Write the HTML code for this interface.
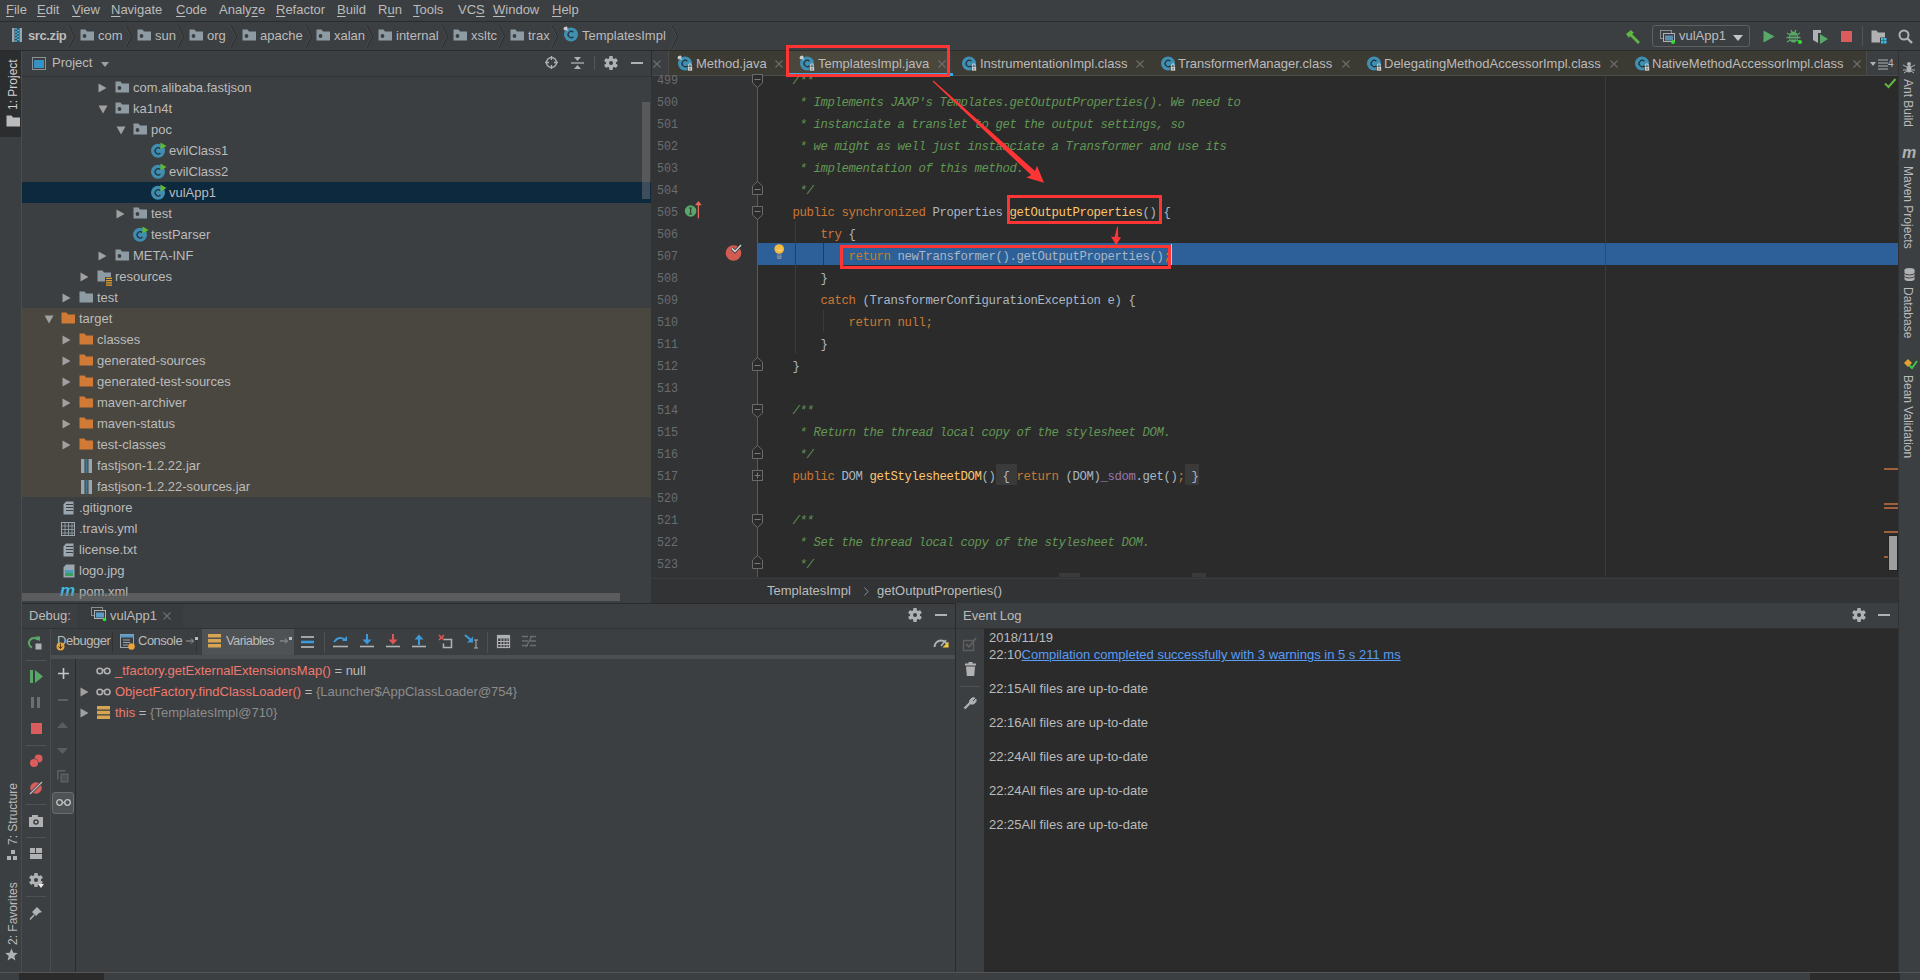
<!DOCTYPE html><html><head><meta charset="utf-8"><style>
*{box-sizing:border-box}
html,body{margin:0;padding:0}
body{width:1920px;height:980px;overflow:hidden;position:relative;background:#3C3F41;font-family:"Liberation Sans",sans-serif;font-size:13px;color:#BBBBBB}
.a{position:absolute}
.t{position:absolute;white-space:pre;line-height:16px}
.u{text-decoration:underline;text-underline-offset:2px}
.code{position:absolute;white-space:pre;font-family:"Liberation Mono",monospace;font-size:12.3px;letter-spacing:-0.38px;line-height:22px;color:#A9B7C6}
.cm{color:#629755;font-style:italic}
.kw{color:#CC7832}
.fn{color:#FFC66D}
.fd{color:#9876AA}
.ln{position:absolute;font-family:"Liberation Mono",monospace;font-size:13px;line-height:22px;color:#6A6D70;white-space:pre;transform:scaleX(0.9);transform-origin:0 0}
svg{position:absolute;overflow:visible}
</style></head><body>
<div class="a" style="left:0px;top:0px;width:1920px;height:21px;background:#3C3F41;"></div>
<div class="a" style="left:0px;top:21px;width:1920px;height:1px;background:#2B2B2B;"></div>
<div class="t" style="left:6px;top:2px;"><span class="u">F</span>ile</div>
<div class="t" style="left:37px;top:2px;"><span class="u">E</span>dit</div>
<div class="t" style="left:72px;top:2px;"><span class="u">V</span>iew</div>
<div class="t" style="left:111px;top:2px;"><span class="u">N</span>avigate</div>
<div class="t" style="left:176px;top:2px;"><span class="u">C</span>ode</div>
<div class="t" style="left:219px;top:2px;">Analy<span class="u">z</span>e</div>
<div class="t" style="left:276px;top:2px;"><span class="u">R</span>efactor</div>
<div class="t" style="left:337px;top:2px;"><span class="u">B</span>uild</div>
<div class="t" style="left:378px;top:2px;">R<span class="u">u</span>n</div>
<div class="t" style="left:413px;top:2px;"><span class="u">T</span>ools</div>
<div class="t" style="left:458px;top:2px;">VC<span class="u">S</span></div>
<div class="t" style="left:493px;top:2px;"><span class="u">W</span>indow</div>
<div class="t" style="left:552px;top:2px;"><span class="u">H</span>elp</div>
<div class="a" style="left:0px;top:50px;width:1920px;height:1px;background:#2B2B2B;"></div>
<svg style="left:12px;top:28px;" width="10" height="14" viewBox="0 0 10 14"><rect x="0" y="0" width="10" height="14" fill="#9AA7B0"/><rect x="2.5" y="0" width="5" height="14" fill="#2F4A5A"/><path d="M3 1h2M5 2.5h2M3 4h2M5 5.5h2M3 7h2M5 8.5h2M3 10h2M5 11.5h2M3 13h2" stroke="#40B6E0" stroke-width="1.4"/></svg>
<div class="t" style="left:28px;top:28px;font-weight:bold;letter-spacing:-0.4px">src.zip</div>
<svg style="left:67.5px;top:24.5px;" width="8" height="23" viewBox="0 0 8 23"><path d="M1 0.5L6.5 11.5L1 22.5" stroke="#2A2A2A" stroke-width="1" fill="none"/><path d="M0 0.5L5.5 11.5L0 22.5" stroke="#4A4D4F" stroke-width="0.8" fill="none"/></svg>
<svg style="left:80px;top:28px;" width="15" height="14" viewBox="0 0 15 14"><path d="M0.5 1.5h5l1.5 2h7v9h-13.5z" fill="#8E9BA3"/><circle cx="4.5" cy="8" r="1.9" fill="#3C3F41"/></svg>
<div class="t" style="left:98px;top:28px;">com</div>
<svg style="left:124.5px;top:24.5px;" width="8" height="23" viewBox="0 0 8 23"><path d="M1 0.5L6.5 11.5L1 22.5" stroke="#2A2A2A" stroke-width="1" fill="none"/><path d="M0 0.5L5.5 11.5L0 22.5" stroke="#4A4D4F" stroke-width="0.8" fill="none"/></svg>
<svg style="left:137px;top:28px;" width="15" height="14" viewBox="0 0 15 14"><path d="M0.5 1.5h5l1.5 2h7v9h-13.5z" fill="#8E9BA3"/><circle cx="4.5" cy="8" r="1.9" fill="#3C3F41"/></svg>
<div class="t" style="left:155px;top:28px;">sun</div>
<svg style="left:176.5px;top:24.5px;" width="8" height="23" viewBox="0 0 8 23"><path d="M1 0.5L6.5 11.5L1 22.5" stroke="#2A2A2A" stroke-width="1" fill="none"/><path d="M0 0.5L5.5 11.5L0 22.5" stroke="#4A4D4F" stroke-width="0.8" fill="none"/></svg>
<svg style="left:189px;top:28px;" width="15" height="14" viewBox="0 0 15 14"><path d="M0.5 1.5h5l1.5 2h7v9h-13.5z" fill="#8E9BA3"/><circle cx="4.5" cy="8" r="1.9" fill="#3C3F41"/></svg>
<div class="t" style="left:207px;top:28px;">org</div>
<svg style="left:229.5px;top:24.5px;" width="8" height="23" viewBox="0 0 8 23"><path d="M1 0.5L6.5 11.5L1 22.5" stroke="#2A2A2A" stroke-width="1" fill="none"/><path d="M0 0.5L5.5 11.5L0 22.5" stroke="#4A4D4F" stroke-width="0.8" fill="none"/></svg>
<svg style="left:242px;top:28px;" width="15" height="14" viewBox="0 0 15 14"><path d="M0.5 1.5h5l1.5 2h7v9h-13.5z" fill="#8E9BA3"/><circle cx="4.5" cy="8" r="1.9" fill="#3C3F41"/></svg>
<div class="t" style="left:260px;top:28px;">apache</div>
<svg style="left:304.5px;top:24.5px;" width="8" height="23" viewBox="0 0 8 23"><path d="M1 0.5L6.5 11.5L1 22.5" stroke="#2A2A2A" stroke-width="1" fill="none"/><path d="M0 0.5L5.5 11.5L0 22.5" stroke="#4A4D4F" stroke-width="0.8" fill="none"/></svg>
<svg style="left:316px;top:28px;" width="15" height="14" viewBox="0 0 15 14"><path d="M0.5 1.5h5l1.5 2h7v9h-13.5z" fill="#8E9BA3"/><circle cx="4.5" cy="8" r="1.9" fill="#3C3F41"/></svg>
<div class="t" style="left:334px;top:28px;">xalan</div>
<svg style="left:365.5px;top:24.5px;" width="8" height="23" viewBox="0 0 8 23"><path d="M1 0.5L6.5 11.5L1 22.5" stroke="#2A2A2A" stroke-width="1" fill="none"/><path d="M0 0.5L5.5 11.5L0 22.5" stroke="#4A4D4F" stroke-width="0.8" fill="none"/></svg>
<svg style="left:378px;top:28px;" width="15" height="14" viewBox="0 0 15 14"><path d="M0.5 1.5h5l1.5 2h7v9h-13.5z" fill="#8E9BA3"/><circle cx="4.5" cy="8" r="1.9" fill="#3C3F41"/></svg>
<div class="t" style="left:396px;top:28px;">internal</div>
<svg style="left:440.5px;top:24.5px;" width="8" height="23" viewBox="0 0 8 23"><path d="M1 0.5L6.5 11.5L1 22.5" stroke="#2A2A2A" stroke-width="1" fill="none"/><path d="M0 0.5L5.5 11.5L0 22.5" stroke="#4A4D4F" stroke-width="0.8" fill="none"/></svg>
<svg style="left:453px;top:28px;" width="15" height="14" viewBox="0 0 15 14"><path d="M0.5 1.5h5l1.5 2h7v9h-13.5z" fill="#8E9BA3"/><circle cx="4.5" cy="8" r="1.9" fill="#3C3F41"/></svg>
<div class="t" style="left:471px;top:28px;">xsltc</div>
<svg style="left:497.5px;top:24.5px;" width="8" height="23" viewBox="0 0 8 23"><path d="M1 0.5L6.5 11.5L1 22.5" stroke="#2A2A2A" stroke-width="1" fill="none"/><path d="M0 0.5L5.5 11.5L0 22.5" stroke="#4A4D4F" stroke-width="0.8" fill="none"/></svg>
<svg style="left:510px;top:28px;" width="15" height="14" viewBox="0 0 15 14"><path d="M0.5 1.5h5l1.5 2h7v9h-13.5z" fill="#8E9BA3"/><circle cx="4.5" cy="8" r="1.9" fill="#3C3F41"/></svg>
<div class="t" style="left:528px;top:28px;">trax</div>
<svg style="left:550.5px;top:24.5px;" width="8" height="23" viewBox="0 0 8 23"><path d="M1 0.5L6.5 11.5L1 22.5" stroke="#2A2A2A" stroke-width="1" fill="none"/><path d="M0 0.5L5.5 11.5L0 22.5" stroke="#4A4D4F" stroke-width="0.8" fill="none"/></svg>
<svg style="left:563px;top:26px;" width="16" height="17" viewBox="0 0 16 17"><circle cx="8" cy="8.5" r="7" fill="#3F90B2"/><path d="M10.4 6.3a3.1 3.1 0 1 0 0 4.4" stroke="#22313A" stroke-width="1.2" fill="none"/><path d="M1.5 1.5l3.2 3.2" stroke="#C9CDD0" stroke-width="1.2"/><ellipse cx="2.6" cy="2.4" rx="2.2" ry="1.6" transform="rotate(-35 2.6 2.4)" fill="#C9CDD0"/></svg>
<div class="t" style="left:582px;top:28px;">TemplatesImpl</div>
<svg style="left:670.5px;top:24.5px;" width="8" height="23" viewBox="0 0 8 23"><path d="M1 0.5L6.5 11.5L1 22.5" stroke="#2A2A2A" stroke-width="1" fill="none"/><path d="M0 0.5L5.5 11.5L0 22.5" stroke="#4A4D4F" stroke-width="0.8" fill="none"/></svg>
<svg style="left:1625px;top:29px;" width="16" height="15" viewBox="0 0 16 15"><path d="M1 5l5-4 3 3-2 1 8 8-2 2-8-8-1 2z" fill="#62B543"/></svg>
<div class="a" style="left:1652px;top:25px;width:98px;height:22px;background:transparent;border:1px solid #5E6060;border-radius:3px"></div>
<svg style="left:1660px;top:30px;" width="16" height="14" viewBox="0 0 16 14"><rect x="0.5" y="0.5" width="11" height="8" fill="none" stroke="#8C8C8C"/><rect x="3.5" y="3.5" width="11" height="8" fill="#3C3F41" stroke="#AFB1B3"/><rect x="5" y="5.5" width="8" height="5" fill="#5B8EAF"/><circle cx="13" cy="12" r="2" fill="#2FE22F"/></svg>
<div class="t" style="left:1679px;top:28px;">vulApp1</div>
<svg style="left:1733px;top:35px;" width="10" height="6" viewBox="0 0 10 6"><path d="M0 0h10L5 6z" fill="#C5C5C5"/></svg>
<svg style="left:1763px;top:30px;" width="12" height="13" viewBox="0 0 12 13"><path d="M0.5 0.5L11.5 6.5L0.5 12.5z" fill="#59A869"/></svg>
<svg style="left:1786px;top:28px;" width="17" height="17" viewBox="0 0 17 17"><ellipse cx="7.5" cy="9" rx="4.5" ry="5.5" fill="#59A869"/><path d="M1 5l3 2M14 5l-3 2M0.5 9.5h3M11.5 9.5h3M1 14l3-2M14 14l-3-2M5 2l1 2M10 2l-1 2" stroke="#59A869" stroke-width="1.3"/><path d="M4 8h7M4 11h7" stroke="#3C3F41" stroke-width="1"/><circle cx="14" cy="14" r="2" fill="#2FE22F"/></svg>
<svg style="left:1812px;top:29px;" width="17" height="16" viewBox="0 0 17 16"><path d="M1 1h8v3h-3v10l-5-3z" fill="#AFB1B3"/><path d="M8 5l8 5-8 5z" fill="#59A869"/></svg>
<div class="a" style="left:1841px;top:31px;width:11px;height:11px;background:#DB5C5C;"></div>
<div class="a" style="left:1862px;top:26px;width:1px;height:20px;background:#555555;"></div>
<svg style="left:1871px;top:30px;" width="16" height="14" viewBox="0 0 16 14"><path d="M0.5 0.5h5l1.5 2h7v5h-5v5h-8.5z" fill="#AFB1B3"/><rect x="10" y="8" width="2.5" height="2.5" fill="#40B6E0"/><rect x="13" y="8" width="2.5" height="2.5" fill="#40B6E0"/><rect x="10" y="11" width="2.5" height="2.5" fill="#40B6E0"/><rect x="13" y="11" width="2.5" height="2.5" fill="#40B6E0"/></svg>
<svg style="left:1898px;top:29px;" width="15" height="15" viewBox="0 0 15 15"><circle cx="6" cy="6" r="4.5" fill="none" stroke="#AFB1B3" stroke-width="2"/><path d="M9 9l5 5" stroke="#AFB1B3" stroke-width="2.4"/></svg>
<div class="a" style="left:0px;top:51px;width:21px;height:921px;background:#3C3F41;"></div>
<div class="a" style="left:21px;top:51px;width:1px;height:921px;background:#4A4C4E;"></div>
<div class="a" style="left:0px;top:51px;width:21px;height:86px;background:#2B2D2E;"></div>
<div class="t" style="left:5px;top:110px;color:#D0D0D0;font-size:12px;transform-origin:0 0;transform:rotate(-90deg)">1: Project</div>
<svg style="left:6px;top:114px;" width="15" height="14" viewBox="0 0 15 14"><path d="M0.5 1.5h5l1.5 2h7v9h-13.5z" fill="#BBBBBB"/></svg>
<div class="a" style="left:22px;top:51px;width:629px;height:552px;background:#3C3F41;"></div>
<div class="a" style="left:22px;top:76px;width:629px;height:1px;background:#323232;"></div>
<svg style="left:32px;top:57px;" width="14" height="13" viewBox="0 0 14 13"><rect x="0.5" y="0.5" width="13" height="12" fill="#3C3F41" stroke="#8C9295"/><rect x="2" y="3" width="10" height="8" fill="#3592C4"/></svg>
<div class="t" style="left:52px;top:55px;">Project</div>
<svg style="left:101px;top:62px;" width="8" height="5" viewBox="0 0 8 5"><path d="M0 0h8L4 5z" fill="#A0A0A0"/></svg>
<svg style="left:545px;top:56px;" width="13" height="13" viewBox="0 0 13 13"><circle cx="6.5" cy="6.5" r="5" fill="none" stroke="#AFB1B3" stroke-width="1.3"/><path d="M6.5 0v4M6.5 9v4M0 6.5h4M9 6.5h4" stroke="#AFB1B3" stroke-width="1.3"/></svg>
<svg style="left:571px;top:56px;" width="13" height="14" viewBox="0 0 13 14"><path d="M0 7h13" stroke="#AFB1B3" stroke-width="1.3"/><path d="M3 1h7L6.5 5z M3 13h7L6.5 9z" fill="#AFB1B3"/></svg>
<div class="a" style="left:594px;top:56px;width:1px;height:14px;background:#555555;"></div>
<svg style="left:604px;top:56px;" width="14" height="14" viewBox="0 0 14 14"><g fill="#AFB1B3"><circle cx="7" cy="7" r="5"/><rect x="5.2" y="0" width="3.6" height="3.5" rx="0.8" transform="rotate(0 7 7)"/><rect x="5.2" y="0" width="3.6" height="3.5" rx="0.8" transform="rotate(60 7 7)"/><rect x="5.2" y="0" width="3.6" height="3.5" rx="0.8" transform="rotate(120 7 7)"/><rect x="5.2" y="0" width="3.6" height="3.5" rx="0.8" transform="rotate(180 7 7)"/><rect x="5.2" y="0" width="3.6" height="3.5" rx="0.8" transform="rotate(240 7 7)"/><rect x="5.2" y="0" width="3.6" height="3.5" rx="0.8" transform="rotate(300 7 7)"/></g><circle cx="7" cy="7" r="2" fill="#3C3F41"/></svg>
<div class="a" style="left:631px;top:62px;width:12px;height:2px;background:#AFB1B3;"></div>
<div class="a" style="left:22px;top:308px;width:629px;height:189px;background:#4A4740;"></div>
<div class="a" style="left:22px;top:182px;width:629px;height:21px;background:#0D293E;"></div>
<svg style="left:98px;top:83px;" width="9" height="10" viewBox="0 0 9 10"><path d="M0.5 0.5L8.5 5L0.5 9.5z" fill="#A0A0A0"/></svg>
<svg style="left:115px;top:80px;" width="15" height="14" viewBox="0 0 15 14"><path d="M0.5 1.5h5l1.5 2h7v9h-13.5z" fill="#8E9BA3"/><circle cx="4.5" cy="8" r="1.9" fill="#3C3F41"/></svg>
<div class="t" style="left:133px;top:80px;">com.alibaba.fastjson</div>
<svg style="left:98px;top:105px;" width="10" height="9" viewBox="0 0 10 9"><path d="M0.5 0.5L9.5 0.5L5 8.5z" fill="#A0A0A0"/></svg>
<svg style="left:115px;top:101px;" width="15" height="14" viewBox="0 0 15 14"><path d="M0.5 1.5h5l1.5 2h7v9h-13.5z" fill="#8E9BA3"/><circle cx="4.5" cy="8" r="1.9" fill="#3C3F41"/></svg>
<div class="t" style="left:133px;top:101px;">ka1n4t</div>
<svg style="left:116px;top:126px;" width="10" height="9" viewBox="0 0 10 9"><path d="M0.5 0.5L9.5 0.5L5 8.5z" fill="#A0A0A0"/></svg>
<svg style="left:133px;top:122px;" width="15" height="14" viewBox="0 0 15 14"><path d="M0.5 1.5h5l1.5 2h7v9h-13.5z" fill="#8E9BA3"/><circle cx="4.5" cy="8" r="1.9" fill="#3C3F41"/></svg>
<div class="t" style="left:151px;top:122px;">poc</div>
<svg style="left:151px;top:142px;" width="16" height="17" viewBox="0 0 16 17"><circle cx="7" cy="8.8" r="7" fill="#3F8DB0"/><path d="M9.4 6.6a3.1 3.1 0 1 0 0 4.4" stroke="#22313A" stroke-width="1.2" fill="none"/><path d="M9.5 0.5l6 3.5-6 3.5z" fill="#5FB832"/></svg>
<div class="t" style="left:169px;top:143px;">evilClass1</div>
<svg style="left:151px;top:163px;" width="16" height="17" viewBox="0 0 16 17"><circle cx="7" cy="8.8" r="7" fill="#3F8DB0"/><path d="M9.4 6.6a3.1 3.1 0 1 0 0 4.4" stroke="#22313A" stroke-width="1.2" fill="none"/><path d="M9.5 0.5l6 3.5-6 3.5z" fill="#5FB832"/></svg>
<div class="t" style="left:169px;top:164px;">evilClass2</div>
<svg style="left:151px;top:184px;" width="16" height="17" viewBox="0 0 16 17"><circle cx="7" cy="8.8" r="7" fill="#3F8DB0"/><path d="M9.4 6.6a3.1 3.1 0 1 0 0 4.4" stroke="#22313A" stroke-width="1.2" fill="none"/><path d="M9.5 0.5l6 3.5-6 3.5z" fill="#5FB832"/></svg>
<div class="t" style="left:169px;top:185px;">vulApp1</div>
<svg style="left:116px;top:209px;" width="9" height="10" viewBox="0 0 9 10"><path d="M0.5 0.5L8.5 5L0.5 9.5z" fill="#A0A0A0"/></svg>
<svg style="left:133px;top:206px;" width="15" height="14" viewBox="0 0 15 14"><path d="M0.5 1.5h5l1.5 2h7v9h-13.5z" fill="#8E9BA3"/><circle cx="4.5" cy="8" r="1.9" fill="#3C3F41"/></svg>
<div class="t" style="left:151px;top:206px;">test</div>
<svg style="left:133px;top:226px;" width="16" height="17" viewBox="0 0 16 17"><circle cx="7" cy="8.8" r="7" fill="#3F8DB0"/><path d="M9.4 6.6a3.1 3.1 0 1 0 0 4.4" stroke="#22313A" stroke-width="1.2" fill="none"/><path d="M9.5 0.5l6 3.5-6 3.5z" fill="#5FB832"/></svg>
<div class="t" style="left:151px;top:227px;">testParser</div>
<svg style="left:98px;top:251px;" width="9" height="10" viewBox="0 0 9 10"><path d="M0.5 0.5L8.5 5L0.5 9.5z" fill="#A0A0A0"/></svg>
<svg style="left:115px;top:248px;" width="15" height="14" viewBox="0 0 15 14"><path d="M0.5 1.5h5l1.5 2h7v9h-13.5z" fill="#8E9BA3"/><circle cx="4.5" cy="8" r="1.9" fill="#3C3F41"/></svg>
<div class="t" style="left:133px;top:248px;">META-INF</div>
<svg style="left:80px;top:272px;" width="9" height="10" viewBox="0 0 9 10"><path d="M0.5 0.5L8.5 5L0.5 9.5z" fill="#A0A0A0"/></svg>
<svg style="left:97px;top:269px;" width="16" height="17" viewBox="0 0 16 17"><path d="M0.5 1.5h5l1.5 2h7v9h-13.5z" fill="#8E9BA3"/><rect x="8" y="8" width="8" height="9" fill="#3C3F41"/><path d="M9 9.3h6M9 11.6h6M9 13.9h6M9 16.2h6" stroke="#E5A12E" stroke-width="1.3"/></svg>
<div class="t" style="left:115px;top:269px;">resources</div>
<svg style="left:62px;top:293px;" width="9" height="10" viewBox="0 0 9 10"><path d="M0.5 0.5L8.5 5L0.5 9.5z" fill="#A0A0A0"/></svg>
<svg style="left:79px;top:290px;" width="15" height="14" viewBox="0 0 15 14"><path d="M0.5 1.5h5l1.5 2h7v9h-13.5z" fill="#8E9BA3"/></svg>
<div class="t" style="left:97px;top:290px;">test</div>
<svg style="left:44px;top:315px;" width="10" height="9" viewBox="0 0 10 9"><path d="M0.5 0.5L9.5 0.5L5 8.5z" fill="#A0A0A0"/></svg>
<svg style="left:61px;top:311px;" width="15" height="14" viewBox="0 0 15 14"><path d="M0.5 1.5h5l1.5 2h7v9h-13.5z" fill="#D07A35"/></svg>
<div class="t" style="left:79px;top:311px;">target</div>
<svg style="left:62px;top:335px;" width="9" height="10" viewBox="0 0 9 10"><path d="M0.5 0.5L8.5 5L0.5 9.5z" fill="#A0A0A0"/></svg>
<svg style="left:79px;top:332px;" width="15" height="14" viewBox="0 0 15 14"><path d="M0.5 1.5h5l1.5 2h7v9h-13.5z" fill="#D07A35"/></svg>
<div class="t" style="left:97px;top:332px;">classes</div>
<svg style="left:62px;top:356px;" width="9" height="10" viewBox="0 0 9 10"><path d="M0.5 0.5L8.5 5L0.5 9.5z" fill="#A0A0A0"/></svg>
<svg style="left:79px;top:353px;" width="15" height="14" viewBox="0 0 15 14"><path d="M0.5 1.5h5l1.5 2h7v9h-13.5z" fill="#D07A35"/></svg>
<div class="t" style="left:97px;top:353px;">generated-sources</div>
<svg style="left:62px;top:377px;" width="9" height="10" viewBox="0 0 9 10"><path d="M0.5 0.5L8.5 5L0.5 9.5z" fill="#A0A0A0"/></svg>
<svg style="left:79px;top:374px;" width="15" height="14" viewBox="0 0 15 14"><path d="M0.5 1.5h5l1.5 2h7v9h-13.5z" fill="#D07A35"/></svg>
<div class="t" style="left:97px;top:374px;">generated-test-sources</div>
<svg style="left:62px;top:398px;" width="9" height="10" viewBox="0 0 9 10"><path d="M0.5 0.5L8.5 5L0.5 9.5z" fill="#A0A0A0"/></svg>
<svg style="left:79px;top:395px;" width="15" height="14" viewBox="0 0 15 14"><path d="M0.5 1.5h5l1.5 2h7v9h-13.5z" fill="#D07A35"/></svg>
<div class="t" style="left:97px;top:395px;">maven-archiver</div>
<svg style="left:62px;top:419px;" width="9" height="10" viewBox="0 0 9 10"><path d="M0.5 0.5L8.5 5L0.5 9.5z" fill="#A0A0A0"/></svg>
<svg style="left:79px;top:416px;" width="15" height="14" viewBox="0 0 15 14"><path d="M0.5 1.5h5l1.5 2h7v9h-13.5z" fill="#D07A35"/></svg>
<div class="t" style="left:97px;top:416px;">maven-status</div>
<svg style="left:62px;top:440px;" width="9" height="10" viewBox="0 0 9 10"><path d="M0.5 0.5L8.5 5L0.5 9.5z" fill="#A0A0A0"/></svg>
<svg style="left:79px;top:437px;" width="15" height="14" viewBox="0 0 15 14"><path d="M0.5 1.5h5l1.5 2h7v9h-13.5z" fill="#D07A35"/></svg>
<div class="t" style="left:97px;top:437px;">test-classes</div>
<svg style="left:81px;top:459px;" width="11" height="14" viewBox="0 0 11 14"><rect x="0" y="0" width="11" height="14" fill="#9AA7B0"/><rect x="3.5" y="0" width="4" height="14" fill="#3C3F41"/><path d="M4.5 1h2M4.5 3h2M4.5 5h2M4.5 7h2M4.5 9h2M4.5 11h2M4.5 13h2" stroke="#40B6E0" stroke-width="1"/></svg>
<div class="t" style="left:97px;top:458px;">fastjson-1.2.22.jar</div>
<svg style="left:81px;top:480px;" width="11" height="14" viewBox="0 0 11 14"><rect x="0" y="0" width="11" height="14" fill="#9AA7B0"/><rect x="3.5" y="0" width="4" height="14" fill="#3C3F41"/><path d="M4.5 1h2M4.5 3h2M4.5 5h2M4.5 7h2M4.5 9h2M4.5 11h2M4.5 13h2" stroke="#40B6E0" stroke-width="1"/></svg>
<div class="t" style="left:97px;top:479px;">fastjson-1.2.22-sources.jar</div>
<svg style="left:63px;top:501px;" width="11" height="14" viewBox="0 0 11 14"><path d="M3 0.5h7.5v13h-10v-10z" fill="#9AA7B0"/><path d="M3 3.5h7M3 6.5h7M3 9.5h7" stroke="#3C3F41" stroke-width="1"/></svg>
<div class="t" style="left:79px;top:500px;">.gitignore</div>
<svg style="left:61px;top:522px;" width="14" height="14" viewBox="0 0 14 14"><rect x="0.5" y="0.5" width="13" height="13" fill="none" stroke="#9AA7B0"/><path d="M0.5 4h13M0.5 7.5h13M0.5 11h13M4 0.5v13M7.5 0.5v13M11 0.5v13" stroke="#9AA7B0" stroke-width="0.8"/></svg>
<div class="t" style="left:79px;top:521px;">.travis.yml</div>
<svg style="left:63px;top:543px;" width="11" height="14" viewBox="0 0 11 14"><path d="M3 0.5h7.5v13h-10v-10z" fill="#9AA7B0"/><path d="M3 3.5h7M3 6.5h7M3 9.5h7" stroke="#3C3F41" stroke-width="1"/></svg>
<div class="t" style="left:79px;top:542px;">license.txt</div>
<svg style="left:63px;top:564px;" width="12" height="14" viewBox="0 0 12 14"><path d="M3 0.5h8.5v13h-11v-10z" fill="#9AA7B0"/><rect x="2" y="6" width="8" height="6" fill="#3C9E5C"/><rect x="2" y="6" width="8" height="3" fill="#4A9DBB"/></svg>
<div class="t" style="left:79px;top:563px;">logo.jpg</div>
<div class="t" style="left:60px;top:582px;color:#40B6E0;font-size:17px;font-style:italic;font-weight:bold;line-height:17px">m</div>
<div class="t" style="left:79px;top:584px;">pom.xml</div>
<div class="a" style="left:22px;top:593px;width:598px;height:8px;background:rgba(122,122,122,0.5);"></div>
<div class="a" style="left:642px;top:102px;width:8px;height:97px;background:rgba(122,122,122,0.45);"></div>
<div class="a" style="left:651px;top:51px;width:1px;height:25px;background:#2F3133;"></div>
<div class="a" style="left:651px;top:51px;width:1247px;height:24px;background:#3C3F41;"></div>
<div class="a" style="left:651px;top:75px;width:1247px;height:1px;background:#4B4B4B;"></div>
<svg style="left:653px;top:60px;" width="8" height="8" viewBox="0 0 8 8"><path d="M0.5 0.5L7.5 7.5M7.5 0.5L0.5 7.5" stroke="#6E6E6E" stroke-width="1.1"/></svg>
<div class="a" style="left:668px;top:51px;width:1px;height:24px;background:#4B4B4B;"></div>
<div class="a" style="left:669px;top:51px;width:117px;height:24px;background:#3B3A33;"></div>
<div class="a" style="left:786px;top:51px;width:1px;height:24px;background:#4B4B4B;"></div>
<svg style="left:677px;top:55px;" width="16" height="17" viewBox="0 0 16 17"><circle cx="8" cy="8.5" r="7" fill="#3F90B2"/><path d="M10.4 6.3a3.1 3.1 0 1 0 0 4.4" stroke="#22313A" stroke-width="1.2" fill="none"/><path d="M1.5 1.5l3.2 3.2" stroke="#C9CDD0" stroke-width="1.2"/><ellipse cx="2.6" cy="2.4" rx="2.2" ry="1.6" transform="rotate(-35 2.6 2.4)" fill="#C9CDD0"/><rect x="10.3" y="11.3" width="5.2" height="4.7" fill="#D0D0D0" stroke="#3B3A33" stroke-width="0.7"/><path d="M11.5 11.5v-1.3a1.4 1.4 0 0 1 2.8 0v1.3" stroke="#D0D0D0" fill="none" stroke-width="1"/><rect x="12.5" y="12.8" width="1" height="1.8" fill="#555"/></svg>
<div class="t" style="left:696px;top:56px;">Method.java</div>
<svg style="left:775px;top:60px;" width="8" height="8" viewBox="0 0 8 8"><path d="M0.5 0.5L7.5 7.5M7.5 0.5L0.5 7.5" stroke="#6E6E6E" stroke-width="1.1"/></svg>
<div class="a" style="left:789px;top:51px;width:160px;height:24px;background:#4A473C;"></div>
<div class="a" style="left:949px;top:51px;width:1px;height:24px;background:#4B4B4B;"></div>
<svg style="left:799px;top:55px;" width="16" height="17" viewBox="0 0 16 17"><circle cx="8" cy="8.5" r="7" fill="#3F90B2"/><path d="M10.4 6.3a3.1 3.1 0 1 0 0 4.4" stroke="#22313A" stroke-width="1.2" fill="none"/><path d="M1.5 1.5l3.2 3.2" stroke="#C9CDD0" stroke-width="1.2"/><ellipse cx="2.6" cy="2.4" rx="2.2" ry="1.6" transform="rotate(-35 2.6 2.4)" fill="#C9CDD0"/><rect x="10.3" y="11.3" width="5.2" height="4.7" fill="#D0D0D0" stroke="#4A473C" stroke-width="0.7"/><path d="M11.5 11.5v-1.3a1.4 1.4 0 0 1 2.8 0v1.3" stroke="#D0D0D0" fill="none" stroke-width="1"/><rect x="12.5" y="12.8" width="1" height="1.8" fill="#555"/></svg>
<div class="t" style="left:818px;top:56px;">TemplatesImpl.java</div>
<svg style="left:938px;top:60px;" width="8" height="8" viewBox="0 0 8 8"><path d="M0.5 0.5L7.5 7.5M7.5 0.5L0.5 7.5" stroke="#6E6E6E" stroke-width="1.1"/></svg>
<div class="a" style="left:951px;top:51px;width:202px;height:24px;background:#3B3A33;"></div>
<div class="a" style="left:1153px;top:51px;width:1px;height:24px;background:#4B4B4B;"></div>
<svg style="left:961px;top:55px;" width="16" height="17" viewBox="0 0 16 17"><circle cx="8" cy="8.5" r="7" fill="#3F90B2"/><path d="M10.4 6.3a3.1 3.1 0 1 0 0 4.4" stroke="#22313A" stroke-width="1.2" fill="none"/><rect x="10.3" y="11.3" width="5.2" height="4.7" fill="#D0D0D0" stroke="#3B3A33" stroke-width="0.7"/><path d="M11.5 11.5v-1.3a1.4 1.4 0 0 1 2.8 0v1.3" stroke="#D0D0D0" fill="none" stroke-width="1"/><rect x="12.5" y="12.8" width="1" height="1.8" fill="#555"/></svg>
<div class="t" style="left:980px;top:56px;">InstrumentationImpl.class</div>
<svg style="left:1136px;top:60px;" width="8" height="8" viewBox="0 0 8 8"><path d="M0.5 0.5L7.5 7.5M7.5 0.5L0.5 7.5" stroke="#6E6E6E" stroke-width="1.1"/></svg>
<div class="a" style="left:1153px;top:51px;width:203px;height:24px;background:#3B3A33;"></div>
<div class="a" style="left:1356px;top:51px;width:1px;height:24px;background:#4B4B4B;"></div>
<svg style="left:1160px;top:55px;" width="16" height="17" viewBox="0 0 16 17"><circle cx="8" cy="8.5" r="7" fill="#3F90B2"/><path d="M10.4 6.3a3.1 3.1 0 1 0 0 4.4" stroke="#22313A" stroke-width="1.2" fill="none"/><rect x="10.3" y="11.3" width="5.2" height="4.7" fill="#D0D0D0" stroke="#3B3A33" stroke-width="0.7"/><path d="M11.5 11.5v-1.3a1.4 1.4 0 0 1 2.8 0v1.3" stroke="#D0D0D0" fill="none" stroke-width="1"/><rect x="12.5" y="12.8" width="1" height="1.8" fill="#555"/></svg>
<div class="t" style="left:1178px;top:56px;">TransformerManager.class</div>
<svg style="left:1342px;top:60px;" width="8" height="8" viewBox="0 0 8 8"><path d="M0.5 0.5L7.5 7.5M7.5 0.5L0.5 7.5" stroke="#6E6E6E" stroke-width="1.1"/></svg>
<div class="a" style="left:1356px;top:51px;width:268px;height:24px;background:#3B3A33;"></div>
<div class="a" style="left:1624px;top:51px;width:1px;height:24px;background:#4B4B4B;"></div>
<svg style="left:1366px;top:55px;" width="16" height="17" viewBox="0 0 16 17"><circle cx="8" cy="8.5" r="7" fill="#3F90B2"/><path d="M10.4 6.3a3.1 3.1 0 1 0 0 4.4" stroke="#22313A" stroke-width="1.2" fill="none"/><rect x="10.3" y="11.3" width="5.2" height="4.7" fill="#D0D0D0" stroke="#3B3A33" stroke-width="0.7"/><path d="M11.5 11.5v-1.3a1.4 1.4 0 0 1 2.8 0v1.3" stroke="#D0D0D0" fill="none" stroke-width="1"/><rect x="12.5" y="12.8" width="1" height="1.8" fill="#555"/></svg>
<div class="t" style="left:1384px;top:56px;">DelegatingMethodAccessorImpl.class</div>
<svg style="left:1610px;top:60px;" width="8" height="8" viewBox="0 0 8 8"><path d="M0.5 0.5L7.5 7.5M7.5 0.5L0.5 7.5" stroke="#6E6E6E" stroke-width="1.1"/></svg>
<div class="a" style="left:1624px;top:51px;width:242px;height:24px;background:#3B3A33;"></div>
<div class="a" style="left:1866px;top:51px;width:1px;height:24px;background:#4B4B4B;"></div>
<svg style="left:1634px;top:55px;" width="16" height="17" viewBox="0 0 16 17"><circle cx="8" cy="8.5" r="7" fill="#3F90B2"/><path d="M10.4 6.3a3.1 3.1 0 1 0 0 4.4" stroke="#22313A" stroke-width="1.2" fill="none"/><rect x="10.3" y="11.3" width="5.2" height="4.7" fill="#D0D0D0" stroke="#3B3A33" stroke-width="0.7"/><path d="M11.5 11.5v-1.3a1.4 1.4 0 0 1 2.8 0v1.3" stroke="#D0D0D0" fill="none" stroke-width="1"/><rect x="12.5" y="12.8" width="1" height="1.8" fill="#555"/></svg>
<div class="t" style="left:1652px;top:56px;">NativeMethodAccessorImpl.class</div>
<svg style="left:1853px;top:60px;" width="8" height="8" viewBox="0 0 8 8"><path d="M0.5 0.5L7.5 7.5M7.5 0.5L0.5 7.5" stroke="#6E6E6E" stroke-width="1.1"/></svg>
<div class="a" style="left:789px;top:73px;width:164px;height:3px;background:#3BA7DA;"></div>
<div class="a" style="left:651px;top:51px;width:1px;height:25px;background:#2B2B2B;"></div>
<svg style="left:1870px;top:59px;" width="26" height="12" viewBox="0 0 26 12"><path d="M0 3h6L3 7z" fill="#AFB1B3"/><path d="M8 1h10M8 4h10M8 7h10M8 10h10" stroke="#AFB1B3" stroke-width="1.2"/></svg>
<div class="t" style="left:1888px;top:56px;font-size:10px">4</div>
<div class="a" style="left:651px;top:76px;width:107px;height:501px;background:#313335;"></div>
<div class="a" style="left:758px;top:76px;width:1140px;height:501px;background:#2B2B2B;"></div>
<div class="a" style="left:1605px;top:76px;width:1px;height:501px;background:#3A3A3A;"></div>
<div class="a" style="left:758px;top:243px;width:1140px;height:22px;background:#2D6099;"></div>
<div class="ln" style="left:657px;top:70px">499</div>
<div class="ln" style="left:657px;top:92px">500</div>
<div class="ln" style="left:657px;top:114px">501</div>
<div class="ln" style="left:657px;top:136px">502</div>
<div class="ln" style="left:657px;top:158px">503</div>
<div class="ln" style="left:657px;top:180px">504</div>
<div class="ln" style="left:657px;top:202px">505</div>
<div class="ln" style="left:657px;top:224px">506</div>
<div class="ln" style="left:657px;top:246px">507</div>
<div class="ln" style="left:657px;top:268px">508</div>
<div class="ln" style="left:657px;top:290px">509</div>
<div class="ln" style="left:657px;top:312px">510</div>
<div class="ln" style="left:657px;top:334px">511</div>
<div class="ln" style="left:657px;top:356px">512</div>
<div class="ln" style="left:657px;top:378px">513</div>
<div class="ln" style="left:657px;top:400px">514</div>
<div class="ln" style="left:657px;top:422px">515</div>
<div class="ln" style="left:657px;top:444px">516</div>
<div class="ln" style="left:657px;top:466px">517</div>
<div class="ln" style="left:657px;top:488px">520</div>
<div class="ln" style="left:657px;top:510px">521</div>
<div class="ln" style="left:657px;top:532px">522</div>
<div class="ln" style="left:657px;top:554px">523</div>
<div class="code" style="left:792.5px;top:70px"><span class="cm">/**</span></div>
<div class="code" style="left:792.5px;top:92px"><span class="cm"> * Implements JAXP's Templates.getOutputProperties(). We need to</span></div>
<div class="code" style="left:792.5px;top:114px"><span class="cm"> * instanciate a translet to get the output settings, so</span></div>
<div class="code" style="left:792.5px;top:136px"><span class="cm"> * we might as well just instanciate a Transformer and use its</span></div>
<div class="code" style="left:792.5px;top:158px"><span class="cm"> * implementation of this method.</span></div>
<div class="code" style="left:792.5px;top:180px"><span class="cm"> */</span></div>
<div class="code" style="left:792.5px;top:202px"><span class="kw">public synchronized </span>Properties <span class="fn">getOutputProperties</span>() {</div>
<div class="code" style="left:820.5px;top:224px"><span class="kw">try </span>{</div>
<div class="code" style="left:848.5px;top:246px"><span class="kw">return </span>newTransformer().getOutputProperties()<span class="kw">;</span></div>
<div class="code" style="left:820.5px;top:268px">}</div>
<div class="code" style="left:820.5px;top:290px"><span class="kw">catch </span>(TransformerConfigurationException e) {</div>
<div class="code" style="left:848.5px;top:312px"><span class="kw">return null;</span></div>
<div class="code" style="left:820.5px;top:334px">}</div>
<div class="code" style="left:792.5px;top:356px">}</div>
<div class="code" style="left:792.5px;top:400px"><span class="cm">/**</span></div>
<div class="code" style="left:792.5px;top:422px"><span class="cm"> * Return the thread local copy of the stylesheet DOM.</span></div>
<div class="code" style="left:792.5px;top:444px"><span class="cm"> */</span></div>
<div class="a" style="left:995.5px;top:464px;width:21px;height:21px;background:#3A3A3A;"></div>
<div class="a" style="left:1184.5px;top:464px;width:14px;height:21px;background:#3A3A3A;"></div>
<div class="code" style="left:792.5px;top:466px"><span class="kw">public </span>DOM <span class="fn">getStylesheetDOM</span>() { <span class="kw">return </span>(DOM)<span class="fd">_sdom</span>.get()<span class="kw">;</span> }</div>
<div class="code" style="left:792.5px;top:510px"><span class="cm">/**</span></div>
<div class="code" style="left:792.5px;top:532px"><span class="cm"> * Set the thread local copy of the stylesheet DOM.</span></div>
<div class="code" style="left:792.5px;top:554px"><span class="cm"> */</span></div>
<div class="a" style="left:757px;top:76px;width:1px;height:501px;background:#5A5A5A;"></div>
<svg style="left:752px;top:74px;" width="11" height="14" viewBox="0 0 11 14"><path d="M0.5 0.5h10v8.5l-5 4.5-5-4.5z" fill="#2B2B2B" stroke="#6A6A6A"/><path d="M2.5 5.5h6" stroke="#7A7A7A"/></svg>
<svg style="left:752px;top:181px;" width="11" height="14" viewBox="0 0 11 14"><path d="M0.5 13.5h10v-8.5l-5-4.5-5 4.5z" fill="#2B2B2B" stroke="#6A6A6A"/><path d="M2.5 8.5h6" stroke="#7A7A7A"/></svg>
<svg style="left:752px;top:206px;" width="11" height="14" viewBox="0 0 11 14"><path d="M0.5 0.5h10v8.5l-5 4.5-5-4.5z" fill="#2B2B2B" stroke="#6A6A6A"/><path d="M2.5 5.5h6" stroke="#7A7A7A"/></svg>
<svg style="left:752px;top:357px;" width="11" height="14" viewBox="0 0 11 14"><path d="M0.5 13.5h10v-8.5l-5-4.5-5 4.5z" fill="#2B2B2B" stroke="#6A6A6A"/><path d="M2.5 8.5h6" stroke="#7A7A7A"/></svg>
<svg style="left:752px;top:404px;" width="11" height="14" viewBox="0 0 11 14"><path d="M0.5 0.5h10v8.5l-5 4.5-5-4.5z" fill="#2B2B2B" stroke="#6A6A6A"/><path d="M2.5 5.5h6" stroke="#7A7A7A"/></svg>
<svg style="left:752px;top:445px;" width="11" height="14" viewBox="0 0 11 14"><path d="M0.5 13.5h10v-8.5l-5-4.5-5 4.5z" fill="#2B2B2B" stroke="#6A6A6A"/><path d="M2.5 8.5h6" stroke="#7A7A7A"/></svg>
<svg style="left:752px;top:470px;" width="11" height="11" viewBox="0 0 11 11"><rect x="0.5" y="0.5" width="10" height="10" fill="#2B2B2B" stroke="#6A6A6A"/><path d="M2.5 5.5h6M5.5 2.5v6" stroke="#7A7A7A"/></svg>
<svg style="left:752px;top:514px;" width="11" height="14" viewBox="0 0 11 14"><path d="M0.5 0.5h10v8.5l-5 4.5-5-4.5z" fill="#2B2B2B" stroke="#6A6A6A"/><path d="M2.5 5.5h6" stroke="#7A7A7A"/></svg>
<svg style="left:752px;top:555px;" width="11" height="14" viewBox="0 0 11 14"><path d="M0.5 13.5h10v-8.5l-5-4.5-5 4.5z" fill="#2B2B2B" stroke="#6A6A6A"/><path d="M2.5 8.5h6" stroke="#7A7A7A"/></svg>
<div class="a" style="left:795px;top:222px;width:1px;height:132px;background:#3B3B3B;"></div>
<div class="a" style="left:823px;top:243px;width:1px;height:22px;background:#283A50;"></div>
<div class="a" style="left:823px;top:310px;width:1px;height:22px;background:#3B3B3B;"></div>
<svg style="left:684px;top:201px;" width="18" height="18" viewBox="0 0 18 18"><circle cx="6.6" cy="10" r="5.8" fill="#59A869"/><path d="M5 7h3.2M5 13h3.2M6.6 7v6" stroke="#3A3A3A" stroke-width="1.2"/><path d="M14.4 17.3V4" stroke="#E8695A" stroke-width="1.3"/><path d="M11 4.3h6.8L14.4 0z" fill="#E8695A"/></svg>
<svg style="left:725px;top:243px;" width="18" height="19" viewBox="0 0 18 19"><circle cx="8.5" cy="10" r="7.8" fill="#D25C52"/><path d="M7 5.5l3 3 6-6.5" stroke="#2B2B2B" stroke-width="3.2" fill="none"/><path d="M7 5.5l3 3 6-6.5" stroke="#C8CBCB" stroke-width="1.8" fill="none"/></svg>
<svg style="left:774px;top:244px;" width="11" height="15" viewBox="0 0 11 15"><circle cx="5.2" cy="5" r="4.8" fill="#F4B942"/><path d="M3 5.5l1.5 1.5 1-1.5 1 1.5 1.5-1.5" stroke="#FBE4A8" stroke-width="0.8" fill="none"/><path d="M2.8 11h5M2.8 12.8h5M3.3 14.5h4" stroke="#8E959B" stroke-width="1.2"/></svg>
<div class="a" style="left:786px;top:45px;width:164px;height:32px;background:transparent;border:3px solid #FF3535"></div>
<div class="a" style="left:1007px;top:195px;width:155px;height:29px;background:transparent;border:3px solid #FF3535"></div>
<div class="a" style="left:840px;top:245px;width:331px;height:24px;background:transparent;border:3px solid #FF3535"></div>
<svg style="left:0;top:0" width="1920" height="980" viewBox="0 0 1920 980"><path d="M932.6 81.4L1031.2 175.1L1026.2 177.6L1044 182.7L1037 165.8L1035 171L933.4 80.6z" fill="#FF3535"/><path d="M1117.2 226.5L1114.6 237L1111 236.6L1116.1 245L1121 237.4L1118.2 237L1118 226.5z" fill="#FF3535"/></svg>
<svg style="left:1884px;top:78px;" width="13" height="11" viewBox="0 0 13 11"><path d="M1 5.5l3.5 3.5 7-8" stroke="#62B543" stroke-width="2" fill="none"/></svg>
<div class="a" style="left:1884px;top:468px;width:14px;height:2px;background:#A0613A;"></div>
<div class="a" style="left:1884px;top:503px;width:14px;height:2px;background:#A0613A;"></div>
<div class="a" style="left:1884px;top:507px;width:14px;height:2px;background:#A0613A;"></div>
<div class="a" style="left:1884px;top:531px;width:14px;height:2px;background:#A0613A;"></div>
<div class="a" style="left:1884px;top:556px;width:4px;height:2px;background:#A0613A;"></div>
<div class="a" style="left:1888px;top:535px;width:10px;height:36px;background:#232323;"></div>
<div class="a" style="left:1889px;top:536px;width:8px;height:34px;background:#9E9E9E;"></div>
<div class="a" style="left:1171px;top:244px;width:1px;height:21px;background:#D0D0D0;"></div>
<div class="a" style="left:1059px;top:573px;width:21px;height:5px;background:#3A3A3A;"></div>
<div class="a" style="left:1192px;top:573px;width:14px;height:5px;background:#3A3A3A;"></div>
<div class="a" style="left:1605px;top:243px;width:1px;height:22px;background:#2A4C75;"></div>
<div class="a" style="left:651px;top:577px;width:1247px;height:26px;background:#313335;"></div>
<div class="a" style="left:651px;top:578px;width:1247px;height:1px;background:#3A3C3E;"></div>
<div class="t" style="left:767px;top:583px;">TemplatesImpl</div>
<svg style="left:864px;top:587px;" width="5" height="9" viewBox="0 0 5 9"><path d="M0.5 0.5L4 4.5L0.5 8.5" stroke="#8C8C8C" fill="none"/></svg>
<div class="t" style="left:877px;top:583px;">getOutputProperties()</div>
<div class="a" style="left:22px;top:603px;width:933px;height:369px;background:#3C3F41;"></div>
<div class="a" style="left:22px;top:603px;width:1876px;height:1px;background:#2B2B2B;"></div>
<div class="a" style="left:78px;top:604px;width:105px;height:24px;background:#393C3E;"></div>
<div class="t" style="left:29px;top:608px;">Debug:</div>
<svg style="left:91px;top:607px;" width="16" height="15" viewBox="0 0 16 15"><rect x="0.5" y="0.5" width="11" height="8" fill="none" stroke="#8C8C8C"/><rect x="3.5" y="3.5" width="11" height="8" fill="#3C3F41" stroke="#AFB1B3"/><rect x="5" y="5.5" width="8" height="5" fill="#5B9BC8"/><circle cx="13.5" cy="12.5" r="1.8" fill="#2FE22F"/></svg>
<div class="t" style="left:110px;top:608px;">vulApp1</div>
<svg style="left:163px;top:612px;" width="8" height="8" viewBox="0 0 8 8"><path d="M0.5 0.5L7.5 7.5M7.5 0.5L0.5 7.5" stroke="#6E6E6E" stroke-width="1.1"/></svg>
<svg style="left:908px;top:608px;" width="14" height="14" viewBox="0 0 14 14"><g fill="#AFB1B3"><circle cx="7" cy="7" r="5"/><rect x="5.2" y="0" width="3.6" height="3.5" rx="0.8" transform="rotate(0 7 7)"/><rect x="5.2" y="0" width="3.6" height="3.5" rx="0.8" transform="rotate(60 7 7)"/><rect x="5.2" y="0" width="3.6" height="3.5" rx="0.8" transform="rotate(120 7 7)"/><rect x="5.2" y="0" width="3.6" height="3.5" rx="0.8" transform="rotate(180 7 7)"/><rect x="5.2" y="0" width="3.6" height="3.5" rx="0.8" transform="rotate(240 7 7)"/><rect x="5.2" y="0" width="3.6" height="3.5" rx="0.8" transform="rotate(300 7 7)"/></g><circle cx="7" cy="7" r="2" fill="#3C3F41"/></svg>
<div class="a" style="left:935px;top:614px;width:12px;height:2px;background:#AFB1B3;"></div>
<div class="a" style="left:22px;top:628px;width:933px;height:1px;background:#323232;"></div>
<div class="a" style="left:50px;top:629px;width:1px;height:343px;background:#4A4C4E;"></div>
<div class="a" style="left:75px;top:659px;width:1px;height:313px;background:#2B2B2B;"></div>
<div class="a" style="left:202px;top:629px;width:92px;height:26px;background:#4E5254;"></div>
<div class="a" style="left:51px;top:655px;width:904px;height:4px;background:#4B4F51;"></div>
<div class="a" style="left:112px;top:632px;width:1px;height:21px;background:#323232;"></div>
<div class="a" style="left:196px;top:632px;width:1px;height:21px;background:#323232;"></div>
<div class="t" style="left:57px;top:633px;letter-spacing:-0.45px">Debugger</div>
<svg style="left:56px;top:642px;" width="9" height="9" viewBox="0 0 9 9"><circle cx="4.5" cy="4.5" r="4" fill="#E7A33E"/><path d="M4.5 1.5v5M2.5 4.5l2 2 2-2" stroke="#5A3E10" stroke-width="1" fill="none"/></svg>
<svg style="left:120px;top:634px;" width="15" height="16" viewBox="0 0 15 16"><rect x="0.5" y="0.5" width="13" height="13" fill="#3C3F41" stroke="#9AA7B0"/><rect x="0.5" y="0.5" width="13" height="3" fill="#5B9BC8"/><path d="M3 6h7M3 8.5h7M3 11h5" stroke="#9AA7B0"/><circle cx="11.5" cy="12.5" r="3.3" fill="#E7A33E"/></svg>
<div class="t" style="left:138px;top:633px;letter-spacing:-0.5px">Console</div>
<svg style="left:186px;top:637px;" width="12" height="7" viewBox="0 0 12 7"><path d="M0 4h7M5 1.5l2.5 2.5L5 6.5" stroke="#9A9A9A" stroke-width="1" fill="none"/><rect x="9" y="0" width="3" height="3" fill="#BBBBBB"/></svg>
<svg style="left:208px;top:634px;" width="14" height="14" viewBox="0 0 14 14"><rect x="0" y="0" width="13" height="3.5" fill="#D6A452"/><rect x="0" y="5" width="13" height="3.5" fill="#D6A452"/><rect x="0" y="10" width="13" height="3.5" fill="#D6A452"/></svg>
<div class="t" style="left:226px;top:633px;letter-spacing:-0.6px">Variables</div>
<svg style="left:280px;top:637px;" width="12" height="7" viewBox="0 0 12 7"><path d="M0 4h7M5 1.5l2.5 2.5L5 6.5" stroke="#9A9A9A" stroke-width="1" fill="none"/><rect x="9" y="0" width="3" height="3" fill="#BBBBBB"/></svg>
<svg style="left:301px;top:636px;" width="14" height="12" viewBox="0 0 14 12"><path d="M0 1h13M0 11h13" stroke="#C5C5C5" stroke-width="1.6"/><path d="M0 6h13" stroke="#3D9AD8" stroke-width="2.6"/></svg>
<div class="a" style="left:324px;top:632px;width:1px;height:21px;background:#505050;"></div>
<svg style="left:333px;top:634px;" width="15" height="14" viewBox="0 0 15 14"><path d="M1 8 Q6 1 12 6" stroke="#3D9AD8" stroke-width="1.8" fill="none"/><path d="M9 7h5v-5z" fill="#3D9AD8"/><path d="M0 12.5h15" stroke="#AFB1B3" stroke-width="1.6"/></svg>
<svg style="left:360px;top:634px;" width="14" height="14" viewBox="0 0 14 14"><path d="M7 0v7" stroke="#3D9AD8" stroke-width="2"/><path d="M2.5 5.5h9L7 10.5z" fill="#3D9AD8"/><path d="M0 12.5h14" stroke="#AFB1B3" stroke-width="1.6"/></svg>
<svg style="left:386px;top:634px;" width="14" height="14" viewBox="0 0 14 14"><path d="M7 0v7" stroke="#E05555" stroke-width="2"/><path d="M2.5 5.5h9L7 10.5z" fill="#E05555"/><path d="M0 12.5h14" stroke="#AFB1B3" stroke-width="1.6"/></svg>
<svg style="left:412px;top:634px;" width="14" height="14" viewBox="0 0 14 14"><path d="M7 11V4" stroke="#3D9AD8" stroke-width="2"/><path d="M2.5 5.5h9L7 0.5z" fill="#3D9AD8"/><path d="M0 12.5h14" stroke="#AFB1B3" stroke-width="1.6"/></svg>
<svg style="left:438px;top:634px;" width="15" height="14" viewBox="0 0 15 14"><path d="M1 1l5 5M6 1l-5 5" stroke="#E05555" stroke-width="1.6"/><path d="M6 5.5h7.5v8h-8v-4" stroke="#AFB1B3" stroke-width="1.5" fill="none"/></svg>
<svg style="left:464px;top:634px;" width="15" height="15" viewBox="0 0 15 15"><path d="M1 1l7 6" stroke="#3D9AD8" stroke-width="2"/><path d="M9 8.5v-6l-6 6z" fill="#3D9AD8"/><path d="M10 6h4M12 6v8M10 14h4" stroke="#AFB1B3" stroke-width="1"/></svg>
<div class="a" style="left:487px;top:632px;width:1px;height:21px;background:#505050;"></div>
<svg style="left:497px;top:635px;" width="13" height="13" viewBox="0 0 13 13"><rect x="0.5" y="0.5" width="12" height="12" fill="none" stroke="#AFB1B3" stroke-width="1.2"/><rect x="0.5" y="0.5" width="12" height="3" fill="#AFB1B3"/><path d="M0.5 6.5h12M0.5 9.5h12M4 3.5v9M7 3.5v9M10 3.5v9" stroke="#AFB1B3" stroke-width="1"/></svg>
<svg style="left:522px;top:635px;" width="14" height="13" viewBox="0 0 14 13"><path d="M0 1.5h6M8 1.5h6M0 6h6M8 6h6M0 10.5h6M8 10.5h6M4 12l6-11" stroke="#6B6E70" stroke-width="1.3"/></svg>
<svg style="left:933px;top:636px;" width="16" height="12" viewBox="0 0 16 12"><path d="M1.5 11A6.5 6.5 0 0 1 14.5 11" stroke="#AFB1B3" stroke-width="2" fill="none"/><path d="M8 10l5-6" stroke="#AFB1B3" stroke-width="1.6"/><path d="M9.5 11.5l6-6v6z" fill="#F4C534"/></svg>
<svg style="left:28px;top:636px;" width="14" height="14" viewBox="0 0 14 14"><path d="M10 4A5 5 0 1 0 4 11.5" stroke="#59A869" stroke-width="2" fill="none"/><path d="M7 0.5h5v5z" fill="#59A869"/><rect x="7.5" y="7.5" width="6" height="6" fill="#AFB1B3"/></svg>
<div class="a" style="left:26px;top:660px;width:20px;height:1px;background:#505050;"></div>
<svg style="left:30px;top:670px;" width="13" height="13" viewBox="0 0 13 13"><rect x="0" y="0" width="3" height="13" fill="#59A869"/><path d="M5 0v13l8-6.5z" fill="#59A869"/></svg>
<svg style="left:31px;top:697px;" width="10" height="11" viewBox="0 0 10 11"><rect x="0" y="0" width="3" height="11" fill="#6E6E6E"/><rect x="6" y="0" width="3" height="11" fill="#6E6E6E"/></svg>
<div class="a" style="left:31px;top:723px;width:11px;height:11px;background:#DB5C5C;"></div>
<div class="a" style="left:26px;top:745px;width:20px;height:1px;background:#505050;"></div>
<svg style="left:29px;top:754px;" width="14" height="14" viewBox="0 0 14 14"><circle cx="9.5" cy="4.5" r="4" fill="#DB5C5C"/><circle cx="5" cy="9" r="4.6" fill="#3C3F41"/><circle cx="5" cy="9" r="4" fill="#DB5C5C"/></svg>
<svg style="left:29px;top:781px;" width="14" height="14" viewBox="0 0 14 14"><circle cx="7" cy="7" r="5.8" fill="#DB5C5C"/><path d="M1 13L13 1" stroke="#3C3F41" stroke-width="3"/><path d="M1 13L13 1" stroke="#BBBBBB" stroke-width="1.3"/></svg>
<div class="a" style="left:26px;top:804px;width:20px;height:1px;background:#505050;"></div>
<svg style="left:29px;top:815px;" width="14" height="12" viewBox="0 0 14 12"><rect x="0" y="2" width="14" height="10" fill="#AFB1B3"/><rect x="3" y="0" width="6" height="3" fill="#AFB1B3"/><circle cx="7" cy="7" r="2.8" fill="#3C3F41"/><circle cx="7" cy="7" r="1.3" fill="#AFB1B3"/></svg>
<div class="a" style="left:26px;top:837px;width:20px;height:1px;background:#505050;"></div>
<svg style="left:30px;top:848px;" width="12" height="11" viewBox="0 0 12 11"><rect x="0" y="0" width="5" height="5" fill="#AFB1B3"/><rect x="6" y="0" width="6" height="5" fill="#AFB1B3"/><rect x="0" y="6" width="12" height="5" fill="#AFB1B3"/></svg>
<svg style="left:29px;top:873px;" width="14" height="14" viewBox="0 0 14 14"><g fill="#AFB1B3"><circle cx="7" cy="7" r="5"/><rect x="5.2" y="0" width="3.6" height="3.5" rx="0.8" transform="rotate(0 7 7)"/><rect x="5.2" y="0" width="3.6" height="3.5" rx="0.8" transform="rotate(60 7 7)"/><rect x="5.2" y="0" width="3.6" height="3.5" rx="0.8" transform="rotate(120 7 7)"/><rect x="5.2" y="0" width="3.6" height="3.5" rx="0.8" transform="rotate(180 7 7)"/><rect x="5.2" y="0" width="3.6" height="3.5" rx="0.8" transform="rotate(240 7 7)"/><rect x="5.2" y="0" width="3.6" height="3.5" rx="0.8" transform="rotate(300 7 7)"/></g><circle cx="7" cy="7" r="2" fill="#3C3F41"/></svg>
<svg style="left:38px;top:884px;" width="6" height="4" viewBox="0 0 6 4"><path d="M0 0h6L3 4z" fill="#EEEEEE"/></svg>
<div class="a" style="left:26px;top:896px;width:20px;height:1px;background:#505050;"></div>
<svg style="left:29px;top:906px;" width="14" height="14" viewBox="0 0 14 14"><path d="M5 9L1 13.5" stroke="#AFB1B3" stroke-width="1.5"/><path d="M8 1l5 5-3 1-3 3-4-4 3-3z" fill="#AFB1B3"/></svg>
<svg style="left:58px;top:668px;" width="11" height="11" viewBox="0 0 11 11"><path d="M5.5 0v11M0 5.5h11" stroke="#C5C5C5" stroke-width="1.6"/></svg>
<div class="a" style="left:58px;top:699px;width:10px;height:2px;background:#5E6060;"></div>
<svg style="left:57px;top:722px;" width="11" height="6" viewBox="0 0 11 6"><path d="M0 6L5.5 0L11 6z" fill="#5A5D5F"/></svg>
<svg style="left:57px;top:748px;" width="11" height="6" viewBox="0 0 11 6"><path d="M0 0L5.5 6L11 0z" fill="#5A5D5F"/></svg>
<svg style="left:57px;top:770px;" width="12" height="13" viewBox="0 0 12 13"><path d="M0.8 9.5V0.8H8.5" stroke="#5E6060" stroke-width="1.4" fill="none"/><rect x="3.5" y="3.5" width="8" height="9" fill="#5E6060"/><path d="M5 6h5M5 8h5M5 10h5" stroke="#3C3F41"/></svg>
<div class="a" style="left:52px;top:792px;width:22px;height:22px;background:#4E5254;border:1px solid #6A6D70;border-radius:3px"></div>
<svg style="left:55.5px;top:799px;" width="15" height="7" viewBox="0 0 15 7"><circle cx="3.5" cy="3.5" r="2.8" fill="none" stroke="#C5C5C5" stroke-width="1.3"/><circle cx="11.5" cy="3.5" r="2.8" fill="none" stroke="#C5C5C5" stroke-width="1.3"/><path d="M6.3 3.5h2.4" stroke="#C5C5C5" stroke-width="1.2"/></svg>
<svg style="left:96px;top:667px;" width="15" height="8" viewBox="0 0 15 8"><circle cx="3.8" cy="4" r="2.8" fill="none" stroke="#B0B0B0" stroke-width="1.6"/><circle cx="11.2" cy="4" r="2.8" fill="none" stroke="#B0B0B0" stroke-width="1.6"/><path d="M6.5 3h2" stroke="#B0B0B0" stroke-width="1.4"/></svg>
<div class="t" style="left:115px;top:663px;"><span style="color:#EE7A6F">_tfactory.getExternalExtensionsMap()</span> = null</div>
<svg style="left:80px;top:687px;" width="9" height="10" viewBox="0 0 9 10"><path d="M0.5 0.5L8.5 5L0.5 9.5z" fill="#A0A0A0"/></svg>
<svg style="left:96px;top:688px;" width="15" height="8" viewBox="0 0 15 8"><circle cx="3.8" cy="4" r="2.8" fill="none" stroke="#B0B0B0" stroke-width="1.6"/><circle cx="11.2" cy="4" r="2.8" fill="none" stroke="#B0B0B0" stroke-width="1.6"/><path d="M6.5 3h2" stroke="#B0B0B0" stroke-width="1.4"/></svg>
<div class="t" style="left:115px;top:684px;"><span style="color:#EE7A6F">ObjectFactory.findClassLoader()</span> = <span style="color:#8C8C8C">{Launcher$AppClassLoader@754}</span></div>
<svg style="left:80px;top:708px;" width="9" height="10" viewBox="0 0 9 10"><path d="M0.5 0.5L8.5 5L0.5 9.5z" fill="#A0A0A0"/></svg>
<svg style="left:97px;top:706px;" width="13" height="13" viewBox="0 0 13 13"><rect x="0" y="0" width="13" height="3.5" fill="#D6A452"/><rect x="0" y="4.75" width="13" height="3.5" fill="#D6A452"/><rect x="0" y="9.5" width="13" height="3.5" fill="#D6A452"/></svg>
<div class="t" style="left:115px;top:705px;"><span style="color:#EE7A6F">this</span> = <span style="color:#8C8C8C">{TemplatesImpl@710}</span></div>
<div class="a" style="left:955px;top:603px;width:1px;height:369px;background:#2B2B2B;"></div>
<div class="a" style="left:956px;top:603px;width:942px;height:25px;background:#3C3F41;"></div>
<div class="a" style="left:956px;top:628px;width:942px;height:1px;background:#323232;"></div>
<div class="t" style="left:963px;top:608px;">Event Log</div>
<svg style="left:1852px;top:608px;" width="14" height="14" viewBox="0 0 14 14"><g fill="#AFB1B3"><circle cx="7" cy="7" r="5"/><rect x="5.2" y="0" width="3.6" height="3.5" rx="0.8" transform="rotate(0 7 7)"/><rect x="5.2" y="0" width="3.6" height="3.5" rx="0.8" transform="rotate(60 7 7)"/><rect x="5.2" y="0" width="3.6" height="3.5" rx="0.8" transform="rotate(120 7 7)"/><rect x="5.2" y="0" width="3.6" height="3.5" rx="0.8" transform="rotate(180 7 7)"/><rect x="5.2" y="0" width="3.6" height="3.5" rx="0.8" transform="rotate(240 7 7)"/><rect x="5.2" y="0" width="3.6" height="3.5" rx="0.8" transform="rotate(300 7 7)"/></g><circle cx="7" cy="7" r="2" fill="#3C3F41"/></svg>
<div class="a" style="left:1878px;top:614px;width:12px;height:2px;background:#AFB1B3;"></div>
<div class="a" style="left:956px;top:629px;width:28px;height:343px;background:#3C3F41;"></div>
<div class="a" style="left:984px;top:629px;width:914px;height:343px;background:#2B2B2B;"></div>
<svg style="left:963px;top:637px;" width="15" height="14" viewBox="0 0 15 14"><rect x="0.5" y="3.5" width="10" height="10" fill="none" stroke="#5E6060" stroke-width="1.4"/><path d="M3 7l3 3 7-9" stroke="#5E6060" stroke-width="1.8" fill="none"/></svg>
<svg style="left:965px;top:662px;" width="11" height="14" viewBox="0 0 11 14"><rect x="0" y="1.5" width="11" height="2" fill="#AFB1B3"/><rect x="3.5" y="0" width="4" height="2" fill="#AFB1B3"/><path d="M1 4.5h9l-0.8 9.5h-7.4z" fill="#AFB1B3"/></svg>
<div class="a" style="left:960px;top:686px;width:20px;height:1px;background:#505050;"></div>
<svg style="left:963px;top:696px;" width="14" height="14" viewBox="0 0 14 14"><path d="M1.5 12.5L8 6" stroke="#AFB1B3" stroke-width="2.4"/><path d="M7 7.5A4 4 0 0 1 12 2l-2.5 2.5 1 1 2.5-2.5A4 4 0 0 1 7 7.5z" fill="#AFB1B3" stroke="#AFB1B3"/></svg>
<div class="t" style="left:989px;top:630px;">2018/11/19</div>
<div class="t" style="left:989px;top:647px;">22:10<span style="color:#589DF6;text-decoration:underline">Compilation completed successfully with 3 warnings in 5 s 211 ms</span></div>
<div class="t" style="left:989px;top:681px;">22:15All files are up-to-date</div>
<div class="t" style="left:989px;top:715px;">22:16All files are up-to-date</div>
<div class="t" style="left:989px;top:749px;">22:24All files are up-to-date</div>
<div class="t" style="left:989px;top:783px;">22:24All files are up-to-date</div>
<div class="t" style="left:989px;top:817px;">22:25All files are up-to-date</div>
<div class="a" style="left:1898px;top:51px;width:22px;height:921px;background:#3C3F41;"></div>
<div class="a" style="left:1898px;top:51px;width:1px;height:921px;background:#2F3133;"></div>
<svg style="left:1903px;top:61px;" width="12" height="12" viewBox="0 0 12 12"><circle cx="6" cy="3" r="2" fill="#AFB1B3"/><ellipse cx="6" cy="8" rx="2.5" ry="3.5" fill="#AFB1B3"/><path d="M0 4l4 2M12 4l-4 2M0 9h3.5M12 9h-3.5M1 12l3-2M11 12l-3-2" stroke="#AFB1B3"/></svg>
<div class="t" style="left:1916px;top:79px;color:#BBBBBB;font-size:12px;transform-origin:0 0;transform:rotate(90deg)">Ant Build</div>
<div class="t" style="left:1902px;top:145px;color:#AFB1B3;font-size:16px;font-style:italic;font-weight:bold;line-height:16px">m</div>
<div class="t" style="left:1916px;top:166px;color:#BBBBBB;font-size:12px;transform-origin:0 0;transform:rotate(90deg)">Maven Projects</div>
<svg style="left:1904px;top:268px;" width="11" height="13" viewBox="0 0 11 13"><ellipse cx="5.5" cy="2" rx="5" ry="2" fill="#AFB1B3"/><path d="M0.5 2v9a5 2 0 0 0 10 0v-9" fill="#AFB1B3"/><path d="M0.5 5a5 2 0 0 0 10 0M0.5 8a5 2 0 0 0 10 0" stroke="#3C3F41" fill="none"/></svg>
<div class="t" style="left:1916px;top:287px;color:#BBBBBB;font-size:12px;transform-origin:0 0;transform:rotate(90deg)">Database</div>
<svg style="left:1903px;top:358px;" width="14" height="12" viewBox="0 0 14 12"><path d="M1 5l4-4 4 4-4 4z" fill="#E3A130"/><path d="M6 7l3 3 5-7" stroke="#3EC94C" stroke-width="1.8" fill="none"/></svg>
<div class="t" style="left:1916px;top:375px;color:#BBBBBB;font-size:12px;transform-origin:0 0;transform:rotate(90deg)">Bean Validation</div>
<div class="t" style="left:5px;top:845px;color:#BBBBBB;font-size:12px;transform-origin:0 0;transform:rotate(-90deg)">7: Structure</div>
<svg style="left:7px;top:850px;" width="10" height="10" viewBox="0 0 10 10"><rect x="4" y="0" width="4" height="4" fill="#AFB1B3"/><rect x="0" y="6" width="4" height="4" fill="#AFB1B3"/><rect x="6" y="6" width="4" height="4" fill="#AFB1B3"/></svg>
<div class="t" style="left:5px;top:945px;color:#BBBBBB;font-size:12px;transform-origin:0 0;transform:rotate(-90deg)">2: Favorites</div>
<svg style="left:5px;top:948px;" width="13" height="13" viewBox="0 0 13 13"><path d="M6.5 0.5l1.8 4.3 4.5 0.3-3.5 2.9 1.1 4.5-3.9-2.5-3.9 2.5 1.1-4.5-3.5-2.9 4.5-0.3z" fill="#AFB1B3"/></svg>
<div class="a" style="left:0px;top:972px;width:1920px;height:1px;background:#555555;"></div>
<div class="a" style="left:0px;top:973px;width:1920px;height:7px;background:#3C3F41;"></div>
<div class="a" style="left:19px;top:973px;width:85px;height:7px;background:#2B2B2B;"></div>
<div class="a" style="left:1810px;top:973px;width:90px;height:7px;background:#2B2B2B;"></div>
</body></html>
